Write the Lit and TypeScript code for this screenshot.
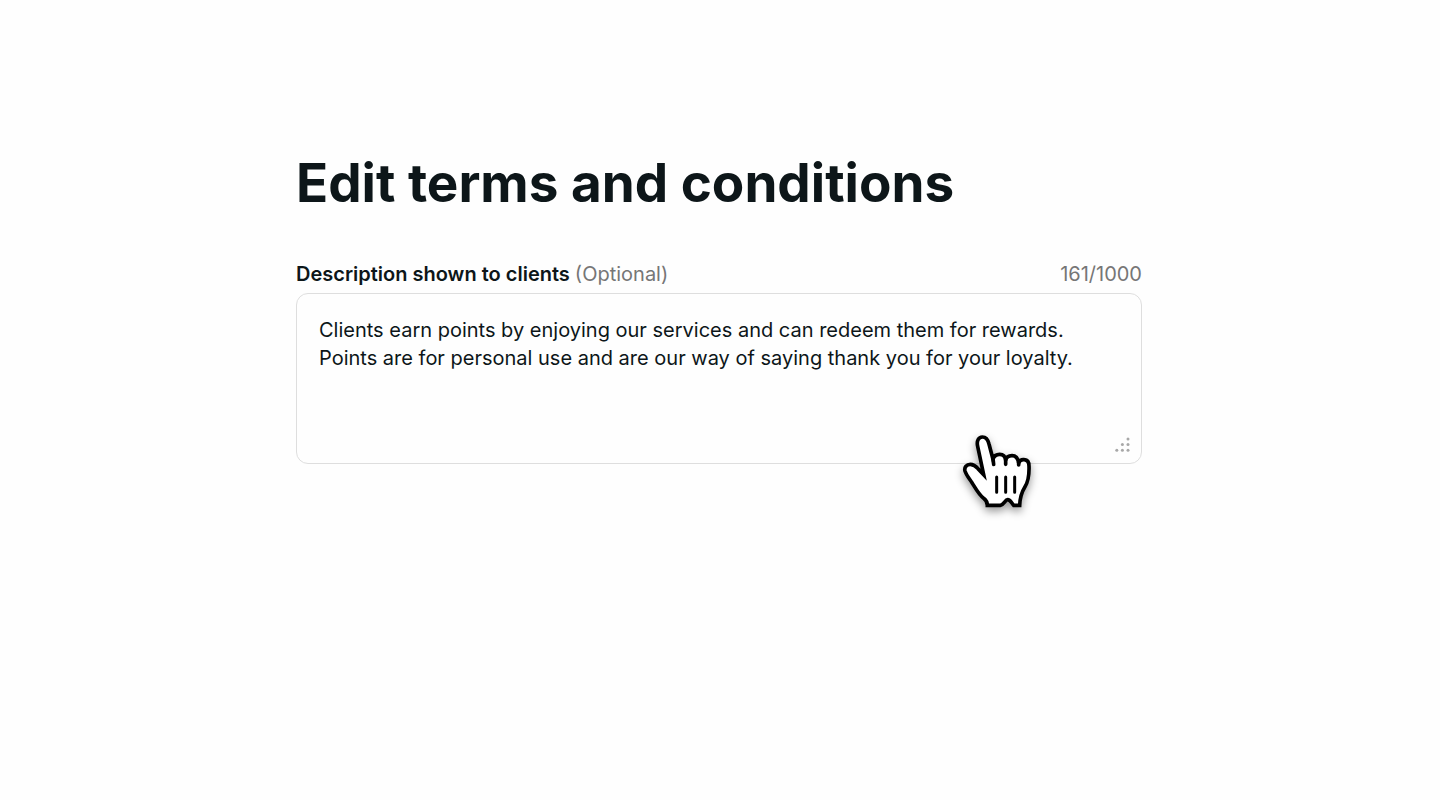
import { LitElement, html, css } from "lit";
import { customElement, state } from "lit/decorators.js";

@customElement("app-root")
export class AppRoot extends LitElement {
  static styles = css`
    :host {
      display: block;
      min-height: 100vh;
      box-sizing: border-box;
      padding: 149px 22px 40px 20px;
      background: #fefefe;
      color: #0d1619;
      font-family: Inter, "Liberation Sans", sans-serif;
    }
    .form {
      position: relative;
      max-width: 846px;
      margin: 0 auto;
    }
    .title {
      margin: 0 0 44px;
      font-size: 53px;
      line-height: 68px;
      font-weight: 700;
    }
    .head {
      display: flex;
      justify-content: space-between;
      gap: 16px;
      margin-bottom: 5px;
      font-size: 20px;
      line-height: 27px;
    }
    .label {
      font-weight: 600;
    }
    .muted {
      color: #767676;
      font-weight: 400;
    }
    .field {
      position: relative;
      display: flex;
    }
    .input {
      flex: 1;
      min-width: 0;
      box-sizing: border-box;
      height: 171px;
      margin: 0;
      padding: 22px;
      border: 1px solid #dedede;
      border-radius: 12px;
      outline: none;
      resize: none;
      background: #fefefe;
      color: inherit;
      font: inherit;
      font-size: 20px;
      line-height: 28px;
    }
    .grip {
      position: absolute;
      right: 11px;
      bottom: 11px;
      width: 16px;
      height: 16px;
      fill: #a8a8a8;
      pointer-events: none;
    }
    .pointer {
      position: absolute;
      right: 92px;
      bottom: -56px;
      width: 100px;
      height: 95px;
      overflow: visible;
      pointer-events: none;
      filter: drop-shadow(0 4px 4px rgba(0, 0, 0, 0.4));
    }
  `;

  @state() private text =
    "Clients earn points by enjoying our services and can redeem them for rewards.\nPoints are for personal use and are our way of saying thank you for your loyalty.";
  @state() private count = 161;

  private onInput(e: Event) {
    this.text = (e.target as HTMLTextAreaElement).value;
    this.count = this.text.length;
  }

  render() {
    return html`
      <main class="form">
        <h1 class="title">Edit terms and conditions</h1>
        <div class="head">
          <label class="label" for="description"
            >Description shown to clients <span class="muted">(Optional)</span></label
          >
          <span class="muted">${this.count}/1000</span>
        </div>
        <div class="field">
          <textarea
            class="input"
            id="description"
            maxlength="1000"
            spellcheck="false"
            .value=${this.text}
            @input=${this.onInput}
          ></textarea>
          <svg class="grip" viewBox="0 0 16 16" aria-hidden="true">
            <circle cx="13" cy="2" r="1.5" />
            <circle cx="7.4" cy="7.6" r="1.5" />
            <circle cx="13" cy="7.6" r="1.5" />
            <circle cx="1.8" cy="13.2" r="1.5" />
            <circle cx="7.4" cy="13.2" r="1.5" />
            <circle cx="13" cy="13.2" r="1.5" />
          </svg>
          <svg
            class="pointer"
            viewBox="0 0 300 285"
            fill="none"
            stroke="#000"
            stroke-width="11"
            stroke-linejoin="round"
            stroke-linecap="round"
            aria-hidden="true"
          >
            <path
              fill="#fff"
              stroke-linejoin="miter"
              d="M101 149 L83 64 C79 47 86 36 97 36 C108 36 114 44 117 57 L129 103 C132 92 140 88 149 88 C160 88 166 95 167 106 C169 97 177 92 186 92 C198 92 204 100 206 114 C209 106 216 103 223 104 C233 105 237 112 237 123 C238 151 234 171 225 185 C215 201 210 213 209 241 L191 241 C184 233 181 224 173 224 C165 224 162 240 151 241 L112 241 C112 231 109 226 101 220 C86 208 76 189 66 173 C59 162 49 151 45 138 C42 127 50 118 61 118 C72 118 78 124 84 131 Z"
            />
            <path d="M129 100 L131 118 M167 104 V118 M206 112 V120" />
            <path d="M140 156 V202 M167 156 V202 M194 156 V202" stroke-width="9" />
          </svg>
        </div>
      </main>
    `;
  }
}
